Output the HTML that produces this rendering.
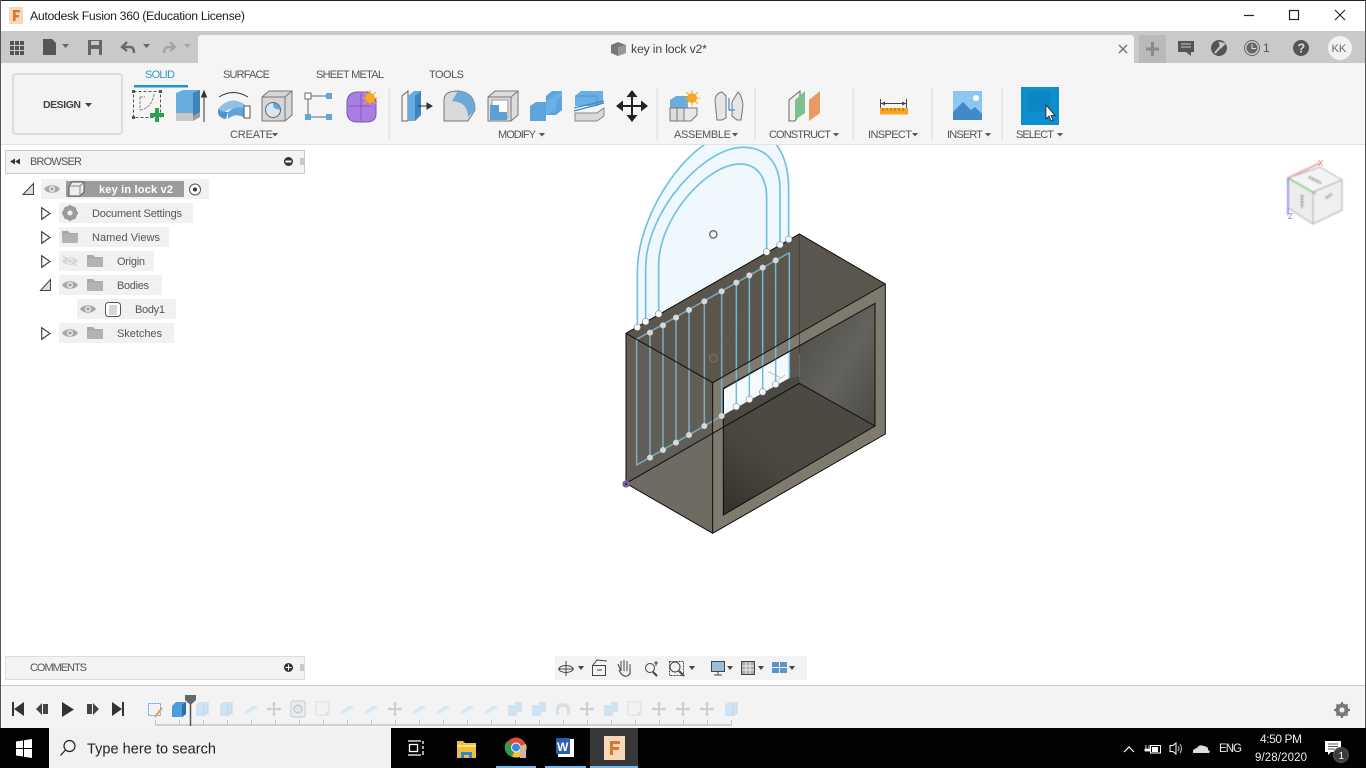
<!DOCTYPE html>
<html><head><meta charset="utf-8"><title>Autodesk Fusion 360</title>
<style>
html,body{margin:0;padding:0;width:1366px;height:768px;overflow:hidden;background:#fff}
svg{display:block;position:absolute;left:0;top:0}
text{font-family:"Liberation Sans",sans-serif;fill:#555;font-size:11px}
</style></head><body>
<svg width="1366" height="768" viewBox="0 0 1366 768" xmlns="http://www.w3.org/2000/svg">
<defs>
<linearGradient id="wall" x1="0" y1="0" x2="1" y2="1"><stop offset="0" stop-color="#4c4a45"/><stop offset=".55" stop-color="#63625d"/><stop offset="1" stop-color="#4c4a45"/></linearGradient>
<linearGradient id="floor" x1="0" y1="1" x2="1" y2="0"><stop offset="0" stop-color="#33312c"/><stop offset=".35" stop-color="#4a4740"/><stop offset="1" stop-color="#4d4a43"/></linearGradient>
<filter id="b1"><feGaussianBlur stdDeviation=".7"/></filter>
<symbol id="eye" viewBox="0 0 16 10" overflow="visible"><path d="M0 5C3 0 13 0 16 5C13 10 3 10 0 5Z" fill="#a8a8a8"/><circle cx="8" cy="5" r="3" fill="#eee"/><circle cx="8" cy="5" r="1.6" fill="#a0a0a0"/></symbol>
<symbol id="folder" viewBox="0 0 16 12" overflow="visible"><path d="M0 0H6L8 2H16V12H0Z" fill="#a8a8a8"/><rect x="0" y="3" width="16" height="9" fill="#b2b2b2"/></symbol>
<symbol id="tri" viewBox="0 0 10 13" overflow="visible"><path d="M.7.7L9 6.5L.7 12.3Z" fill="#fff" stroke="#444" stroke-width="1.2"/></symbol>
<symbol id="fb" viewBox="0 0 14 16" overflow="visible"><path d="M1 3L5 1H13V13L9 15H1Z" fill="#cfe3f3"/><path d="M9 3V15M13 1V13" stroke="#b5d4ec"/></symbol>
<symbol id="fd" viewBox="0 0 14 8" overflow="visible"><path d="M1 7L9 1H13L13 3L5 8H2Z" fill="#d3e6f5"/></symbol>
<symbol id="fm" viewBox="0 0 14 14" overflow="visible"><path d="M7 0V14M0 7H14" stroke="#c8c8c8" stroke-width="1.6"/><path d="M5 2.5L7 .3L9 2.5ZM5 11.5L7 13.7L9 11.5ZM2.5 5L.3 7L2.5 9ZM11.5 5L13.7 7L11.5 9Z" fill="#c8c8c8"/></symbol>
<symbol id="fc" viewBox="0 0 14 16" overflow="visible"><rect x="0" y="0" width="14" height="16" rx="2" fill="#ececec" stroke="#c8c8c8"/><circle cx="7" cy="8" r="4" fill="#dce9f3" stroke="#bbb"/></symbol>
<symbol id="fs" viewBox="0 0 16 16" overflow="visible"><rect x="1" y="1" width="13" height="13" fill="none" stroke="#d6d6d6" stroke-dasharray="2 1"/><path d="M10 14L15 9" stroke="#f4dcc7" stroke-width="2"/></symbol>
<symbol id="ff" viewBox="0 0 16 16" overflow="visible"><path d="M1 4H8V1H15V11H10V15H1Z" fill="#cfe3f3"/></symbol>
<symbol id="fa" viewBox="0 0 16 16" overflow="visible"><path d="M1 14V8C1 4 4 2 8 2C12 2 15 4 15 8V14H12V9C12 7 10 6 8 6C6 6 4 7 4 9V14Z" fill="#d8dfe5"/></symbol>
</defs>

<!-- title bar -->
<rect width="1366" height="31" fill="#fff"/>
<rect x="9" y="7" width="14" height="17" fill="#f7d9ba"/>
<path d="M13 10H20V12.4H15.6V15H19V17.4H15.6V21H13Z" fill="#d9782a"/>
<text x="30" y="20" style="fill:#222;font-size:12.3px" textLength="215">Autodesk Fusion 360 (Education License)</text>
<path d="M1244 15.5H1254" stroke="#222" stroke-width="1.2"/>
<rect x="1289.5" y="10.5" width="9" height="9" fill="none" stroke="#222" stroke-width="1.2"/>
<path d="M1335 10L1345 20M1345 10L1335 20" stroke="#222" stroke-width="1.1"/>

<!-- app bar -->
<rect y="31" width="1366" height="32" fill="#c9c9c9"/>
<path d="M198 63V39Q198 35 202 35H1130Q1134 35 1134 39V63Z" fill="#f5f5f5"/>
<g fill="#555">
<rect x="10" y="41" width="4" height="4"/><rect x="15" y="41" width="4" height="4"/><rect x="20" y="41" width="4" height="4"/>
<rect x="10" y="46" width="4" height="4"/><rect x="15" y="46" width="4" height="4"/><rect x="20" y="46" width="4" height="4"/>
<rect x="10" y="51" width="4" height="4"/><rect x="15" y="51" width="4" height="4"/><rect x="20" y="51" width="4" height="4"/>
<path d="M43 39H52L56 43V55H43Z"/><path d="M62 44H69L65.500 48Z" fill="#666"/>
<path d="M88 40H102V55H88Z" fill="#666"/>
</g>
<rect x="91" y="41" width="8" height="4" fill="#c9c9c9"/><rect x="91" y="49" width="8" height="6" fill="#c9c9c9"/>
<path d="M127 42L122 47L127 51M122 47H130Q134 47 134 53" fill="none" stroke="#6a6a6a" stroke-width="2.4"/>
<path d="M143 44H150L146.500 48Z" fill="#666"/>
<path d="M170 42L175 47L170 51M175 47H168Q164 47 164 53" fill="none" stroke="#a5a5a5" stroke-width="2.4"/>
<path d="M184 44H191L187.500 48Z" fill="#a5a5a5"/>

<!-- doc tab -->
<path d="M611 45L618 42L626 45V53L618 56L611 53Z" fill="#777"/><path d="M618 47L626 45V53L618 56Z" fill="#999"/>
<text x="631" y="53" style="font-size:12.3px;fill:#444" textLength="76">key in lock v2*</text>
<path d="M1119 45L1127 53M1127 45L1119 53" stroke="#777" stroke-width="1.5"/>
<rect x="1139" y="35" width="27" height="28" rx="2" fill="#b9b9b9"/>
<path d="M1152.500 42V56M1146 49H1159" stroke="#8a8a8a" stroke-width="3"/>
<path d="M1178 41H1194V52H1191V56L1186 52H1178Z" fill="#555"/>
<path d="M1181 44H1191M1181 47H1191" stroke="#c9c9c9"/>
<circle cx="1219" cy="48" r="8" fill="#555"/><path d="M1215 53L1221 46M1220 43L1224 44L1221 47Z" stroke="#c9c9c9" stroke-width="2" fill="#c9c9c9"/>
<circle cx="1252" cy="48" r="7.500" fill="none" stroke="#666" stroke-width="1"/><circle cx="1252" cy="48" r="5.500" fill="#666"/><path d="M1252 44V48.500H1256" stroke="#ddd" fill="none"/>
<text x="1263" y="52" style="font-size:12px;fill:#555">1</text>
<circle cx="1301" cy="48" r="8" fill="#555"/><text x="1297.500" y="52.500" style="font-size:12.500px;font-weight:bold;fill:#ddd">?</text>
<circle cx="1340" cy="48" r="12" fill="#f2f2f2"/><text x="1331.500" y="52" style="font-size:11px;fill:#666">KK</text>

<!-- toolbar -->
<rect y="63" width="1366" height="81" fill="#f5f5f5"/>
<rect y="144" width="1366" height="1" fill="#e2e2e2"/>
<rect x="13" y="74" width="109" height="60" rx="3" fill="#f3f3f3" stroke="#dcdcdc" stroke-width="2"/>
<text x="43" y="108" style="font-size:10.500px;font-weight:bold;fill:#444" textLength="38">DESIGN</text>
<path d="M85 103H92L88.500 107Z" fill="#444"/>
<text x="145" y="78" style="fill:#2f97d3" textLength="30">SOLID</text>
<rect x="134" y="85" width="54" height="2.500" fill="#1f96d2"/>
<text x="223" y="78" textLength="47">SURFACE</text>
<text x="316" y="78" textLength="68">SHEET METAL</text>
<text x="429" y="78" textLength="35">TOOLS</text>

<!-- create icons -->
<rect x="133.500" y="91.500" width="27" height="26" fill="none" stroke="#555" stroke-dasharray="3 2"/>
<path d="M132 90h3v3h-3zM159 90h3v3h-3zM132 116h3v3h-3z" fill="#555"/>
<path d="M140 97H145M140 97V110M140 110Q152 108 154 94" fill="none" stroke="#888" stroke-dasharray="3 1"/>
<path d="M157 108V122M150 115H164" stroke="#2fa04f" stroke-width="4"/>
<path d="M176 93L183 90H200L200 112L193 116H176Z" fill="#69ade0"/><path d="M193 93V116L200 112V90Z" fill="#3f83bb"/><rect x="176" y="113" width="17" height="8" fill="#c8c8c8"/><path d="M193 116V121L200 117V112Z" fill="#9a9a9a"/>
<path d="M204 122V93M204 91L201.500 97H206.500Z" stroke="#333" fill="#333"/>
<path d="M218 109Q233 92 250 109L249 116Q233 102 222 115Q218 113 218 109Z" fill="#8fc1e8"/><path d="M218 109V113Q219 118 226 119L228 112Q221 112 218 109Z" fill="#4f94cc"/><path d="M228 112Q234 106 244 108L245 118Q235 112 228 119Z" fill="#5fa4da"/><rect x="244" y="106" width="6" height="12" fill="#fff" stroke="#555"/>
<path d="M219 97Q233 88 248 97" fill="none" stroke="#333"/>
<path d="M262 97L269 91H292V115L285 121H262Z" fill="#d6d6d6" stroke="#777"/><path d="M262 97H285V121M285 97L292 91" fill="none" stroke="#777"/><circle cx="273" cy="110" r="7.500" fill="#d8e6f2" stroke="#666"/><path d="M273 103A7 7 0 0 1 280 110L274 108Z" fill="#5fa4da"/>
<rect x="305" y="93" width="6" height="6" fill="#fff" stroke="#666"/><rect x="326" y="93" width="6" height="6" fill="#5ea7de"/><rect x="305" y="114" width="6" height="6" fill="#5ea7de"/><rect x="326" y="114" width="6" height="6" fill="#5ea7de"/>
<path d="M311 96H326M308 99V114M311 117H326" stroke="#666"/>
<path d="M347 103Q347 92 358 92H368L376 100V114Q376 122 366 122H358Q347 122 347 112Z" fill="#a97de2" stroke="#7c55b5"/><path d="M349 106H372M361 94V121" stroke="#8258ba"/>
<circle cx="370" cy="98" r="5" fill="#f9a825"/><path d="M370 90V106M362 98H378M364 92L376 104M376 92L364 104" stroke="#f9a825"/>
<text x="230" y="138" textLength="43">CREATE</text><path d="M272 133H278L275 136.500Z" fill="#555"/>
<rect x="388.500" y="88" width="1.500" height="52" fill="#e3e3e3"/>

<!-- modify icons -->
<path d="M402 96L408 91V121H402Z" fill="#f5f5f5" stroke="#666"/><path d="M408 96L414 91H421V115L415 121H408Z" fill="#69ade0"/><path d="M415 96V121L421 115V91Z" fill="#3f83bb"/><path d="M418 106H429M432 106L427 103V109Z" stroke="#333" fill="#333"/>
<path d="M444 121V100Q444 91 458 91Q475 92 475 110L468 121Z" fill="#d9d9d9" stroke="#777"/><path d="M458 91Q475 92 475 110L468 117Q468 102 452 101Z" fill="#6aa9dc"/>
<path d="M488 97L495 91H518V115L511 121H488Z" fill="#ddd" stroke="#777"/><path d="M488 97H511V121M511 97L518 91" fill="none" stroke="#777"/><path d="M492 100H508V118H492Z" fill="#fff" stroke="#999"/><path d="M490 105H499V112H507V120H490Z" fill="#5c9fd6"/>
<path d="M530 106L536 102H546V96L552 91H562V110L556 115H546V121H530Z" fill="#5ea4dc"/><path d="M546 101L562 91V96L556 101ZM546 115L556 110V101H546Z" fill="#6ab0e6"/>
<path d="M575 96L581 91H603V102L597 106H575Z" fill="#6aafe6"/><path d="M575 96H597V106" fill="none" stroke="#4f93c9"/>
<path d="M574 111L604 103M574 108L604 101" stroke="#4288c2" stroke-width="1.300"/>
<path d="M575 113H597L604 108V116L597 121H575Z" fill="#d9d9d9" stroke="#888"/>
<path d="M632 92V120M618 106H646" stroke="#222" stroke-width="2"/>
<path d="M632 90L626.500 97H637.500ZM632 122L626.500 115H637.500ZM616 106L623 100.500V111.500ZM648 106L641 100.500V111.500Z" fill="#222"/>
<text x="498" y="138" textLength="38">MODIFY</text><path d="M539 133H545L542 136.500Z" fill="#555"/>
<rect x="656.500" y="88" width="1.500" height="52" fill="#e3e3e3"/>

<!-- assemble -->
<path d="M670 100L676 96H688V108H670Z" fill="#69ade0"/><path d="M670 108H684V121H670Z" fill="#ddd" stroke="#777"/><path d="M684 108H697V115L691 121H684Z" fill="#e8e8e8" stroke="#777"/><path d="M677 108V121" stroke="#777"/>
<circle cx="692" cy="98" r="5" fill="#f9a825"/><path d="M692 90V106M684 98H700M686 92L698 104M698 92L686 104" stroke="#f9a825"/>
<path d="M715 100Q716 93 722 92L726 96V118L722 120H717Z" fill="#e6e6e6" stroke="#777"/><path d="M732 102L738 92Q742 96 743 105L741 120H737L732 116Z" fill="#e6e6e6" stroke="#777"/><path d="M729 98V110H735" stroke="#4f8fc9" fill="none" stroke-width="1.300"/>
<text x="674" y="138" textLength="57">ASSEMBLE</text><path d="M732 133H738L735 136.500Z" fill="#555"/>
<rect x="754.500" y="88" width="1.500" height="52" fill="#e3e3e3"/>

<!-- construct -->
<path d="M789 121V100L800 91V114L795 121Z" fill="#f0f0f0" stroke="#666"/><path d="M795 120V100L805 91V113Z" fill="#7cc08e"/><path d="M809 121V100L820 91V113Z" fill="#e79a66"/>
<text x="769" y="138" textLength="62">CONSTRUCT</text><path d="M833 133H839L836 136.500Z" fill="#555"/>
<rect x="852.500" y="88" width="1.500" height="52" fill="#e3e3e3"/>

<!-- inspect -->
<path d="M880.500 99V108M906.500 99V108M881 103.500H906" stroke="#444"/><path d="M881 103.500L885 101.500V105.500ZM906 103.500L902 101.500V105.500Z" fill="#444"/>
<rect x="880" y="108" width="28" height="6.500" fill="#f5a623"/><path d="M883 108V111M887 108V111M891 108V111M895 108V111M899 108V111M903 108V111" stroke="#7a5a10" stroke-width=".7"/>
<text x="868" y="138" textLength="44">INSPECT</text><path d="M912 133H918L915 136.500Z" fill="#555"/>
<rect x="931.500" y="88" width="1.500" height="52" fill="#e3e3e3"/>

<!-- insert -->
<rect x="953" y="91" width="29" height="29" fill="#8cc6f2"/><path d="M953 120V112L963 102L971 110L975 107L982 114V120Z" fill="#3f8ac7"/><circle cx="976" cy="98" r="3" fill="#fff"/>
<text x="947" y="138" textLength="36">INSERT</text><path d="M985 133H991L988 136.500Z" fill="#555"/>
<rect x="1001.500" y="88" width="1.500" height="52" fill="#e3e3e3"/>

<!-- select -->
<rect x="1021" y="87" width="38" height="38" fill="#0d8ed2"/>
<rect x="1027" y="90" width="24" height="22" fill="#0c87c6" stroke="#1b9a92" stroke-dasharray="2 1"/>
<path d="M1046 105V119L1049 116L1051 121L1053 120L1051 115.500H1055Z" fill="#fff" stroke="#222" stroke-width=".8"/>
<text x="1016" y="138" textLength="38">SELECT</text><path d="M1057 133H1063L1060 136.500Z" fill="#555"/>

<!-- browser -->
<rect x="5.500" y="150.500" width="299" height="23" fill="#f3f3f3" stroke="#ccc"/>
<path d="M15 158.500L10 161.500L15 164.500ZM20 158.500L15 161.500L20 164.500Z" fill="#333"/>
<text x="30" y="165" textLength="52">BROWSER</text>
<circle cx="288.500" cy="161.500" r="4.500" fill="#333"/><rect x="285.500" y="160.500" width="6" height="2" fill="#fff"/>
<path d="M301 158V165M303 158V165" stroke="#888" stroke-width=".8"/>

<rect x="41" y="179" width="168" height="20" fill="#f1f1f1"/>
<rect x="66" y="181" width="118" height="16" fill="#9c9c9c"/>
<use href="#eye" x="44" y="184" width="16" height="10"/>
<path d="M69 196V186L72 182H84V192L80 196Z" fill="#eee" stroke="#555"/><path d="M69 186H80V196M80 186L84 182" fill="none" stroke="#888"/>
<text x="99" y="193" style="font-weight:bold;fill:#fff" textLength="74">key in lock v2</text>
<circle cx="195" cy="189.500" r="5.500" fill="#fff" stroke="#555"/><circle cx="195" cy="189.500" r="2" fill="#333"/>
<path d="M23 194.500L33.500 183.500V194.500Z" fill="#ddd" stroke="#444"/>

<rect x="59" y="203" width="134" height="20" fill="#f1f1f1"/>
<use href="#tri" x="41" y="207" width="10" height="13"/>
<circle cx="70" cy="213" r="5.500" fill="none" stroke="#9a9a9a" stroke-width="3.500"/>
<path d="M70 205V221M62 213H78M64.500 207.500L75.500 218.500M75.500 207.500L64.500 218.500" stroke="#9a9a9a" stroke-width="2.400"/><circle cx="70" cy="213" r="2.500" fill="#f1f1f1"/>
<text x="92" y="217" textLength="90">Document Settings</text>

<rect x="59" y="227" width="110" height="20" fill="#f1f1f1"/>
<use href="#tri" x="41" y="231" width="10" height="13"/>
<use href="#folder" x="62" y="231" width="16" height="12"/>
<text x="92" y="241" textLength="68">Named Views</text>

<rect x="59" y="251" width="95" height="20" fill="#f1f1f1"/>
<use href="#tri" x="41" y="255" width="10" height="13"/>
<g opacity=".35"><use href="#eye" x="62" y="256" width="16" height="10"/><path d="M63 256L77 266" stroke="#888"/></g>
<use href="#folder" x="87" y="255" width="16" height="12"/>
<text x="117" y="265" textLength="28">Origin</text>

<rect x="59" y="275" width="103" height="20" fill="#f1f1f1"/>
<path d="M40.500 290.500L50.500 279.500V290.500Z" fill="#ddd" stroke="#444"/>
<use href="#eye" x="62" y="280" width="16" height="10"/>
<use href="#folder" x="87" y="279" width="16" height="12"/>
<text x="117" y="289" textLength="32">Bodies</text>

<rect x="77" y="299" width="99" height="20" fill="#f1f1f1"/>
<use href="#eye" x="80" y="304" width="16" height="10"/>
<rect x="105.500" y="302.500" width="15" height="14" rx="3" fill="#fff" stroke="#555"/><rect x="109" y="305" width="8" height="10" fill="#d5d8dc"/>
<text x="135" y="313" textLength="30">Body1</text>

<rect x="59" y="323" width="115" height="20" fill="#f1f1f1"/>
<use href="#tri" x="41" y="327" width="10" height="13"/>
<use href="#eye" x="62" y="328" width="16" height="10"/>
<use href="#folder" x="87" y="327" width="16" height="12"/>
<text x="117" y="337" textLength="45">Sketches</text>

<!-- model -->
<svg x="610" y="145" width="300" height="400" viewBox="0 15 900 1200" style="position:static">
<path d="M82 570V400C82 210 240 -20 400 -20C480 -20 536 40 536 150V300L82 570Z" fill="#eef8fd"/>
<g fill="none" stroke="#74c0e0" stroke-width="5">
<path d="M82 562V395C82 220 240 -25 400 -30C490 -32 536 40 536 150V298"/>
<path d="M107 545V385C107 215 280 22 400 22C470 22 510 70 510 150V314"/>
<path d="M146 522V375C146 235 290 72 390 72C440 72 470 110 470 175V336"/>
</g>
<circle cx="310" cy="283" r="11" fill="none" stroke="#666" stroke-width="4"/>
<!-- interior: left back wall with window -->
<path d="M340 745L568 618V730L340 865Z" fill="#5a5650"/>
<path d="M342 748L537 637V715L342 825Z" fill="#f4fbff"/>
<!-- interior: right back wall -->
<path d="M568 618L795 490V858L568 730Z" fill="url(#wall)"/>
<!-- floor -->
<path d="M340 862L568 730L795 858L340 1125Z" fill="url(#floor)"/>
<path d="M340 825L537 715L568 710V730L340 862Z" fill="#4c4942"/>
<!-- faces -->
<path d="M48 580L568 282L826 432L308 728Z" fill="#5a564e"/>
<path d="M48 580L308 728V1180L48 1030Z" fill="#6e6b63"/>
<path d="M48 580L308 728V880L48 1030Z" fill="#615e57"/>
<path fill-rule="evenodd" d="M308 728L826 432V882L308 1180ZM340 745V1125L795 858V490Z" fill="#7e7a6e"/>
<path d="M568 282V640" stroke="#3a3833" stroke-width="2"/>
<!-- sketch over box -->
<g stroke="#82b4c9" stroke-width="4.500" fill="none" opacity=".9">
<path d="M80 598V975L335 828M80 598L538 338"/>
<path d="M120 578V953M159 556V930M198 533V908M237 510V885M283 484V858M335 454V828"/>
</g>
<g stroke="#74b8d8" stroke-width="4.500" fill="none"><path d="M379 428V800M418 406V778M458 383V756M497 361V733M538 338V715"/></g>
<path d="M475 695L510 712M505 720L525 705" stroke="#e09a66" stroke-width="2"/>
<circle cx="310" cy="655" r="11" fill="none" stroke="#85755c" stroke-width="3"/>
<path d="M230 625L310 655L480 420" stroke="#85755c" stroke-width="1" fill="none" stroke-dasharray="5 4" opacity=".7"/>
<!-- edges -->
<g fill="none" stroke="#0c0c0c" stroke-width="3">
<path d="M48 580L568 282L826 432V882L308 1180L48 1030ZM48 580L308 728V1180M308 728L826 432"/>
<path d="M340 745L795 490V858L340 1125Z"/>
<path d="M48 1030L568 730L795 858"/>
</g>
<!-- sketch points -->
<g fill="#d4d8da">
<circle cx="120" cy="578" r="9"/><circle cx="159" cy="556" r="9"/><circle cx="198" cy="533" r="9"/><circle cx="237" cy="510" r="9"/><circle cx="283" cy="484" r="9"/><circle cx="335" cy="454" r="9"/><circle cx="379" cy="428" r="9"/><circle cx="418" cy="406" r="9"/><circle cx="458" cy="383" r="9"/><circle cx="497" cy="361" r="9"/>
<circle cx="120" cy="953" r="9"/><circle cx="159" cy="930" r="9"/><circle cx="198" cy="908" r="9"/><circle cx="237" cy="885" r="9"/><circle cx="283" cy="858" r="9"/><circle cx="335" cy="828" r="9"/>
</g>
<g fill="#f4f6f7" stroke="#5d6a70" stroke-width="1.500">
<circle cx="379" cy="800" r="10"/><circle cx="418" cy="778" r="10"/><circle cx="458" cy="756" r="10"/><circle cx="497" cy="733" r="10"/>
<circle cx="82" cy="562" r="10"/><circle cx="107" cy="545" r="10"/><circle cx="146" cy="522" r="10"/><circle cx="470" cy="336" r="10"/><circle cx="510" cy="314" r="10"/><circle cx="536" cy="298" r="10"/>
</g>
<circle cx="48" cy="1032" r="11" fill="#7d5fa0"/><circle cx="48" cy="1032" r="3" fill="#222"/>
</svg>

<!-- viewcube -->
<g filter="url(#b1)">
<path d="M1288 178L1320 167L1342 180L1313 192Z" fill="#f4f4f4" stroke="#aaa"/>
<path d="M1288 178L1313 192V224L1288 208Z" fill="#ececec" stroke="#aaa"/>
<path d="M1313 192L1342 180V210L1313 224Z" fill="#f0f0f0" stroke="#aaa"/>
<path d="M1288 178L1320 163" stroke="#eba2a2" stroke-width="1.800"/>
<path d="M1288 178L1316 194" stroke="#7fce7f" stroke-width="1.800"/>
<path d="M1288 178V215" stroke="#8c8ce6" stroke-width="1.800"/>
<path d="M1309 177L1321 183M1302 195V208M1326 198L1332 194" stroke="#999" stroke-width="3" stroke-dasharray="2 1"/>
</g>
<text x="1318" y="166" style="font-size:8px;fill:#e08080">X</text>
<text x="1288" y="219" style="font-size:8px;fill:#8080e0">Z</text>

<!-- comments -->
<rect x="5.500" y="656.500" width="299" height="23" fill="#f3f3f3" stroke="#ddd"/>
<text x="30" y="671" textLength="57">COMMENTS</text>
<circle cx="288.500" cy="667.500" r="4.500" fill="#333"/><path d="M285.500 667.500H291.500M288.500 664.500V670.500" stroke="#fff"/>
<path d="M301 664V671M303 664V671" stroke="#888" stroke-width=".8"/>

<!-- nav bar -->
<rect x="555" y="656" width="252" height="24" fill="#f3f3f3"/>
<g fill="none" stroke="#444">
<ellipse cx="566" cy="669" rx="7" ry="3.500"/><path d="M566 661V676M558 669H574"/>
<rect x="592.500" y="665.500" width="13" height="10"/><path d="M593 665L597 660L607 661M597 670H602" />
<path d="M621 671L618 664M621 671V661M624 671V660M627 671V661M630 672V664M619 670Q622 677 627 676Q631 675 630 670"/>
<circle cx="650" cy="668" r="4.500"/><path d="M653 672L657 676" stroke-width="2"/><path d="M656 661V666M654 663H658"/>
<rect x="669.500" y="661.500" width="14" height="14" stroke-dasharray="2 1"/><circle cx="675" cy="667" r="5"/><path d="M679 671L684 676" stroke-width="2"/>
<rect x="711.500" y="661.500" width="13" height="10" fill="#9cbdd8"/><path d="M714 675H722M718 672V675"/>
<rect x="741.500" y="661.500" width="13" height="13" fill="#aaa"/><path d="M746 662V674M750 662V674M742 666H754M742 670H754" stroke="#eee"/>
</g>
<g fill="#5c93c8"><rect x="772" y="662" width="7" height="5"/><rect x="780" y="662" width="7" height="5"/><rect x="772" y="668" width="7" height="5"/><rect x="780" y="668" width="7" height="5"/></g>
<g fill="#444"><path d="M578 666H584L581 670ZM689 666H695L692 670ZM727 666H733L730 670ZM758 666H764L761 670ZM789 666H795L792 670Z"/></g>

<!-- timeline -->
<rect y="685" width="1366" height="1.500" fill="#c8c8c8"/>
<rect y="686" width="1366" height="42" fill="#f3f3f3"/>
<g fill="#333">
<rect x="12" y="702" width="2" height="14"/><path d="M24 702V716L14 709Z"/>
<path d="M36 709L42 703V715ZM43 704H48V714H43Z" fill="#444"/>
<path d="M62 702V717L74 709.500Z"/>
<path d="M87 704H92V714H87ZM93 703L99 709L93 715Z" fill="#444"/>
<path d="M112 702V716L122 709Z"/><rect x="122" y="702" width="2" height="14"/>
</g>
<rect x="148.500" y="703.500" width="12" height="12" fill="none" stroke="#5a9fd6" stroke-dasharray="2 1"/><path d="M155 717L162 708" stroke="#e89a55" stroke-width="2"/>
<path d="M172 706L176 702H186V714L182 717H172Z" fill="#4f9be0"/><path d="M182 705V717L186 714V702Z" fill="#2c6fa8"/>
<use href="#fb" x="195" y="701" width="14" height="16"/><use href="#fb" x="219" y="701" width="14" height="16"/>
<use href="#fd" x="244" y="705" width="14" height="8"/><use href="#fm" x="267" y="702" width="14" height="14"/>
<use href="#fc" x="291" y="701" width="14" height="16"/><use href="#fs" x="315" y="701" width="16" height="16"/>
<use href="#fd" x="340" y="705" width="14" height="8"/><use href="#fd" x="364" y="705" width="14" height="8"/>
<use href="#fm" x="388" y="702" width="14" height="14"/>
<use href="#fd" x="412" y="705" width="14" height="8"/><use href="#fd" x="436" y="705" width="14" height="8"/><use href="#fd" x="460" y="705" width="14" height="8"/><use href="#fd" x="484" y="705" width="14" height="8"/>
<use href="#ff" x="507" y="701" width="16" height="16"/><use href="#ff" x="531" y="701" width="16" height="16"/>
<use href="#fa" x="555" y="701" width="16" height="16"/><use href="#fm" x="580" y="702" width="14" height="14"/>
<use href="#ff" x="603" y="701" width="16" height="16"/><use href="#fs" x="627" y="701" width="16" height="16"/>
<use href="#fm" x="652" y="702" width="14" height="14"/><use href="#fm" x="676" y="702" width="14" height="14"/><use href="#fm" x="700" y="702" width="14" height="14"/>
<use href="#fb" x="724" y="701" width="14" height="16"/>
<path d="M155.500 725H732" stroke="#c4c4c4" stroke-width="1.500"/>
<path d="M155.500 720V725M179.500 720V725M203.500 720V725M227.500 720V725M251.500 720V725M275.500 720V725M299.500 720V725M323.500 720V725M347.500 720V725M371.500 720V725M395.500 720V725M419.500 720V725M443.500 720V725M467.500 720V725M491.500 720V725M515.500 720V725M539.500 720V725M563.500 720V725M587.500 720V725M611.500 720V725M635.500 720V725M659.500 720V725M683.500 720V725M707.500 720V725M731.500 720V725" stroke="#c4c4c4"/>
<path d="M190.500 700V726" stroke="#555" stroke-width="1.500"/><path d="M185 695H196V700L190.500 705L185 700Z" fill="#666"/>
<circle cx="1342" cy="710" r="5" fill="none" stroke="#777" stroke-width="3"/><path d="M1342 702V718M1334 710H1350M1336.500 704.500L1347.500 715.500M1347.500 704.500L1336.500 715.500" stroke="#777" stroke-width="2"/><circle cx="1342" cy="710" r="2.500" fill="#f3f3f3"/>

<!-- taskbar -->
<rect y="728" width="1366" height="40" fill="#020202"/>
<path d="M16 741.500L23 740.500V748H16ZM24 740.300L32 739V748H24ZM16 749H23V756.500L16 755.500ZM24 749H32V758L24 756.700Z" fill="#fff"/>
<rect x="49" y="728" width="342" height="40" fill="#f1f1f1"/>
<circle cx="69.500" cy="746" r="5.500" fill="none" stroke="#222" stroke-width="1.200"/><path d="M65.500 750L60.500 755.500" stroke="#222" stroke-width="1.300"/>
<text x="87" y="753.500" style="font-size:14.500px;fill:#222" textLength="129">Type here to search</text>
<g fill="none" stroke="#fff" stroke-width="1.300"><path d="M408 741H421M408 755H421"/><rect x="409.500" y="744.500" width="8" height="7"/><path d="M423 741V744M423 746V749M423 751V755"/></g>
<path d="M457 741H463L465 743H476V758H457Z" fill="#f2c038"/><path d="M457 745H476V747H457Z" fill="#fbe28c"/><path d="M461 752H472V758H469V755H464V758H461Z" fill="#2f88d0"/>
<circle cx="516" cy="747.500" r="10" fill="#e24a3b"/><path d="M516 747.500L507 741A10 10 0 0 0 512 757Z" fill="#2f9e4a"/><path d="M516 747.500L526 744A10 10 0 0 1 516 757.500L512 757Z" fill="#f3c22e"/><circle cx="516" cy="747.500" r="4.500" fill="#3f84e8" stroke="#fff"/><path d="M520 746H526V758H520Z" fill="#c9b9a5"/>
<rect x="558" y="739" width="16" height="18" fill="#fff"/><rect x="556" y="738" width="14" height="16" fill="#2a5db0"/><text x="557" y="751" style="font-size:12px;font-weight:bold;fill:#fff">W</text>
<rect x="590" y="728" width="48" height="40" fill="#383838"/>
<rect x="604" y="736" width="21" height="24" fill="#f7d9ba"/><path d="M610 741H620V744H613V747H619V750H613V755H610Z" fill="#d9782a"/>
<rect x="496" y="766" width="40" height="2" fill="#76b9ed"/><rect x="545" y="766" width="41" height="2" fill="#76b9ed"/><rect x="590" y="766" width="48" height="2" fill="#76b9ed"/>
<path d="M1124 752L1129 747L1134 752" fill="none" stroke="#fff" stroke-width="1.200"/>
<path d="M1146 745V749M1149 745V749M1145 749H1150V751H1145Z" stroke="#fff" fill="#fff" stroke-width=".8"/><rect x="1150.500" y="745.500" width="10" height="7.500" fill="none" stroke="#fff"/><rect x="1152" y="747" width="6" height="5" fill="#fff"/>
<path d="M1170 745.500H1173L1176 743V754L1173 751.500H1170Z" fill="none" stroke="#fff"/><path d="M1178 746Q1180 748.500 1178 751M1180 744Q1183 748.500 1180 753" fill="none" stroke="#ccc"/>
<path d="M1193 753Q1192 749 1197 748Q1199 744 1204 746Q1209 747 1208 750Q1211 751 1209 753Z" fill="#ddd"/>
<text x="1219" y="752" style="font-size:11.500px;fill:#eee" textLength="23">ENG</text>
<text x="1260" y="743" style="font-size:12px;fill:#eee" textLength="42">4:50 PM</text>
<text x="1255" y="761" style="font-size:11.500px;fill:#eee" textLength="52">9/28/2020</text>
<path d="M1325 741H1341V752H1331L1328 755V752H1325Z" fill="#fff"/><path d="M1328 744H1338M1328 746.500H1338M1328 749H1335" stroke="#222" stroke-width=".8"/>
<circle cx="1341" cy="755" r="7.500" fill="#3d3d3d" stroke="#555"/><text x="1338.500" y="759" style="font-size:10px;fill:#fff">1</text>

<!-- window edges -->
<rect width="1366" height="1" fill="#222"/>
<rect y="0" width="1" height="728" fill="#555"/>
<rect x="1365" y="0" width="1" height="728" fill="#555"/>
</svg>
</body></html>
